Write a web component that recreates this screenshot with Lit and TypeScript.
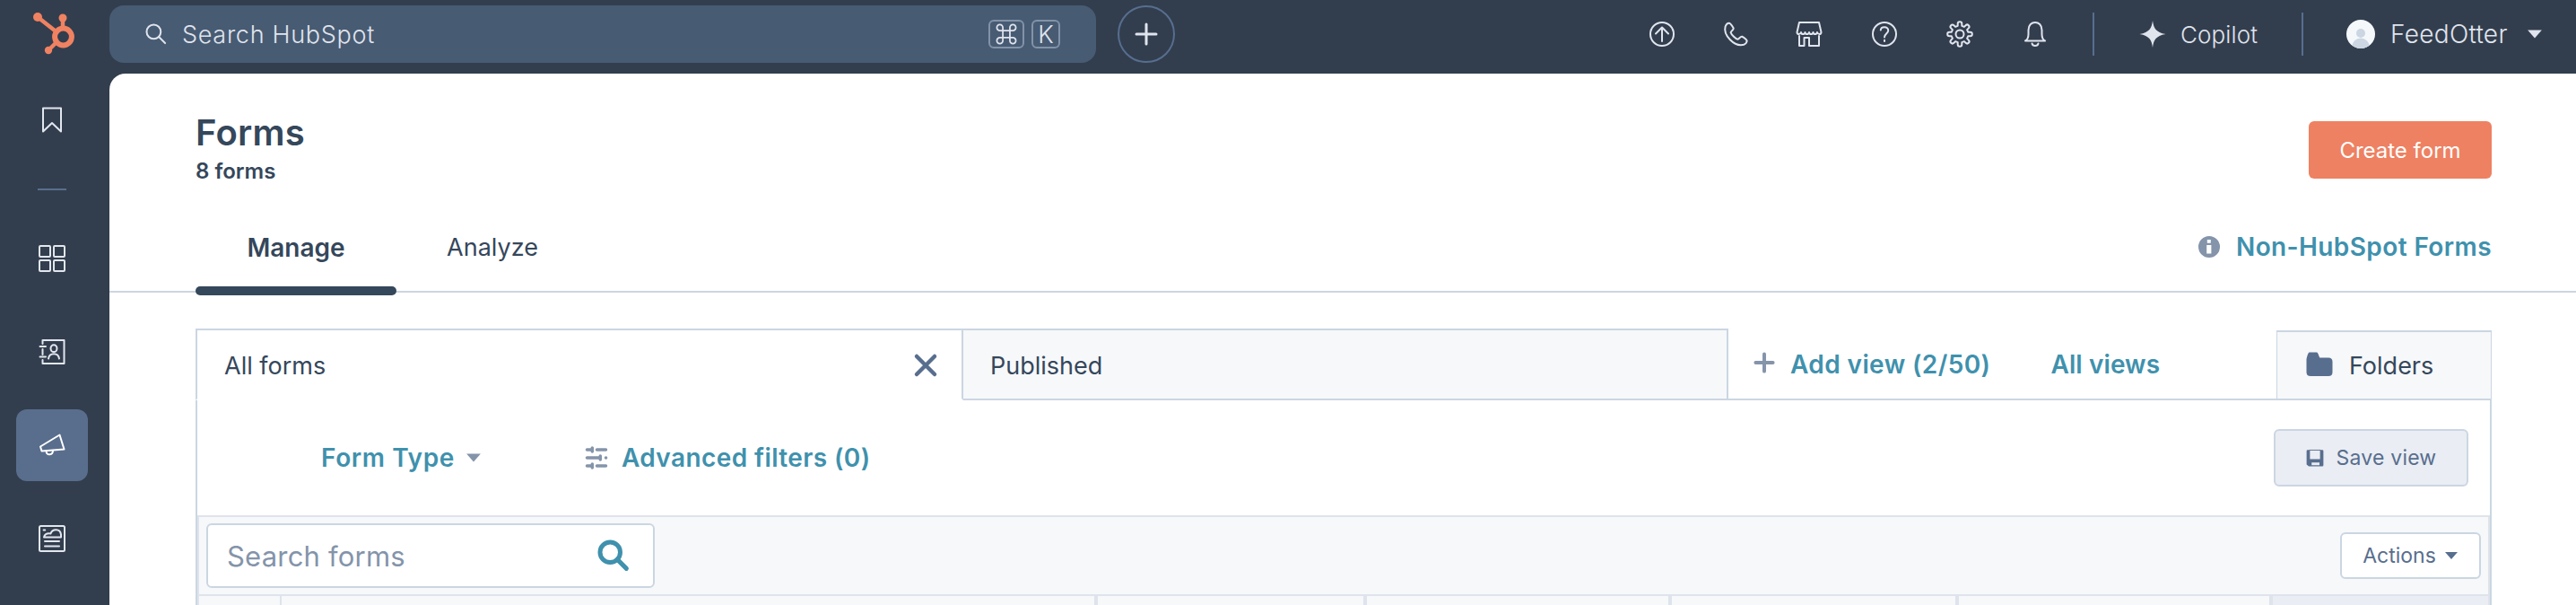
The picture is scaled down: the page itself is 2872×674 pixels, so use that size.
import { LitElement, html, css, svg, nothing } from 'lit';
import { customElement, property } from 'lit/decorators.js';

const OUTLINE_ICONS = {
  bookmark: svg`<path d="M6 2.500h20v26l-10-9.500-10 9.500z" />`,
  grid: svg`
    <rect x="2" y="2" width="12" height="12" rx="1" />
    <rect x="18" y="2" width="12" height="12" rx="1" />
    <rect x="2" y="18" width="12" height="12" rx="1" />
    <rect x="18" y="18" width="12" height="12" rx="1" />
  `,
  contacts: svg`
    <path d="M5.500 7V3h24v26h-24v-4M5.500 13v6M2.500 10h6.500M2.500 21.500h6.500" />
    <ellipse cx="18" cy="12.200" rx="3.500" ry="3.900" />
    <path d="M12 23.500c1-7 11-7 12 0" />
  `,
  megaphone: svg`
    <path d="M3 17.500L24.500 4.500 29.500 20.500 4.500 22.500z" />
    <path d="M9.500 22.500c.5 5.500 7.500 5 7.500-.7" />
  `,
  article: svg`
    <rect x="2" y="2" width="28" height="28" rx="1.500" />
    <path d="M7 14.500c1-4 4-4.500 7.500-4 1.500-5 10.500-6.500 11.500 1v3zM8 19h16M8 24.500h16" />
    <path d="M6.600 6.500h1.600" />
  `,
  search: svg`<circle cx="13" cy="13" r="9" /><path d="M19.500 19.500L27.500 27.500" />`,
  plus: svg`<path d="M16 5v22M5 16h22" />`,
  upgrade: svg`<circle cx="16" cy="16" r="13" /><path d="M16 24V9M9 15.500l7-7 7 7" />`,
  phone: svg`
    <path d="M4.600 7.500c.8-2 2.600-3.800 4-3.800 1.300 0 3.700 3.300 5 5.500.8 1.500-2.700 3.500-3 5 .6 2.200 5.800 7.300 7.800 7.600 1.500-.2 3.200-3.600 4.800-3 2 .8 5.400 3.600 5.500 4.900-.3 1.700-2 3.500-3.600 4.100C14.500 30.500 2 17 4.600 7.500z" />
  `,
  store: svg`
    <path d="M5 3h22l2.500 11c-.4 2.700-3.700 2.700-4.500 0-.6 2.700-4 2.700-4.500 0-.6 2.700-4 2.700-4.500 0-.6 2.700-4 2.700-4.500 0-.6 2.700-4 2.700-4.500 0-.8 2.700-4.100 2.700-4.500 0z" />
    <path d="M5 18v11h5.500v-9h5.500v9h11V18" />
  `,
  help: svg`
    <circle cx="16" cy="16" r="13" />
    <path d="M11.800 11.500c.3-4.500 8.600-4.500 8.400.5 0 3.500-4.200 3.700-4.200 7.500M16 22.700v1.200" />
  `,
  gear: svg`
    <path d="M13.700 6.800V4.500a2.300 2.300 0 0 1 4.600 0v2.300l2.600 1.100 1.700-1.700a2.200 2.200 0 0 1 3.200 3.200l-1.700 1.700 1.100 2.600h2.300a2.300 2.300 0 0 1 0 4.600h-2.300l-1.100 2.600 1.700 1.700a2.200 2.200 0 0 1-3.200 3.200l-1.700-1.700-2.600 1.100v2.300a2.300 2.300 0 0 1-4.600 0v-2.300l-2.600-1.100-1.700 1.700a2.200 2.200 0 0 1-3.200-3.200l1.700-1.700-1.100-2.600H4.500a2.300 2.300 0 0 1 0-4.600h2.300l1.100-2.600-1.700-1.700a2.200 2.200 0 0 1 3.200-3.200l1.700 1.700z" />
    <circle cx="16" cy="16" r="4.500" />
  `,
  bell: svg`
    <path d="M5 23.500c3-1.500 3.500-4 3.500-7.500v-4.500c0-11.500 15-11.500 15 0V16c0 3.500.5 6 3.500 7.500z" />
    <path d="M12.500 26.500c.8 3.300 6.200 3.300 7 0" />
  `,
  close: svg`<path d="M6 6l20 20M26 6L6 26" />`,
  sliders: svg`
    <path d="M5.500 7h5.800M16.500 7h10M5.500 16h14M26.500 16h.1M5.500 25h5.800M16.500 25h10" />
    <path d="M11.300 5v4M20.300 14v4M11.300 23v4" />
  `,
  command: svg`
    <path d="M11.500 11.500h9v9h-9zM11.500 11.500H8a3.800 3.800 0 1 1 3.500-3.700zM20.500 11.500V7.800a3.800 3.800 0 1 1 3.500 3.700zM20.500 20.500H24a3.800 3.800 0 1 1-3.500 3.700zM11.500 20.500v3.700A3.800 3.800 0 1 1 8 20.500z" />
  `,
};

const SOLID_ICONS = {
  sparkle: svg`<path d="M16 1c1.200 8.500 3.500 13 14.500 15-11 2-13.300 6.500-14.500 15-1.200-8.500-3.500-13-14.500-15C12.500 14 14.800 9.500 16 1z" />`,
  info: svg`
    <path fill-rule="evenodd" d="M16 4a12 12 0 1 0 0 24 12 12 0 0 0 0-24zM13.800 8h4v3.700h-4zM13.200 14h5.200v9.500h-5.200z" />
  `,
  folder: svg`<path d="M1.500 12c0-2 1.500-7.500 3-8.500h8.500c1.300 0 2 3.500 3.300 6H26c3 0 4.500 1.500 4.500 4.500v11.500c0 3-1.500 4.500-4.500 4.500H6c-3 0-4.500-1.500-4.500-4.500z" />`,
  save: svg`
    <path fill-rule="evenodd" d="M3 2h4v16.500h18V2h4a2 2 0 0 1 2 2v25a2 2 0 0 1-2 2H5l-4-3V4a2 2 0 0 1 2-2zM10 24.500v4.500h14v-4.500z" />
    <path d="M6 1.500h20v1.500H6z" />
  `,
  caret: svg`<path d="M2 8h28L16 24z" />`,
};

@customElement('ui-icon')
export class UiIcon extends LitElement {
  @property() name = '';
  @property({ type: Number }) size = 32;
  @property({ type: Number }) stroke = 2;

  static styles = css`
    :host {
      display: inline-flex;
      flex: none;
    }

    .outline {
      fill: none;
      stroke: currentColor;
      stroke-linecap: round;
      stroke-linejoin: round;
    }

    .solid {
      fill: currentColor;
    }
  `;

  render() {
    const solid = SOLID_ICONS[this.name];
    return html`
      <svg
        class=${solid ? 'solid' : 'outline'}
        width=${this.size}
        height=${this.size}
        stroke-width=${solid ? nothing : this.stroke}
        viewBox="0 0 32 32"
      >
        ${solid || OUTLINE_ICONS[this.name]}
      </svg>
    `;
  }
}

@customElement('side-nav')
export class SideNav extends LitElement {
  static styles = css`
    :host {
      display: flex;
      flex-direction: column;
      align-items: center;
      width: 122px;
      box-sizing: border-box;
      padding: 12px 6px 0 0;
      color: #e2e6ee;
    }

    .logo {
      flex: none;
      margin: 0 0 42px 4px;
      fill: #f08262;
      stroke: #f08262;
    }

    .item {
      display: flex;
      flex: none;
      align-items: center;
      justify-content: center;
      width: 80px;
      height: 80px;
      border-radius: 12px;
      margin-bottom: 24px;
    }

    .bookmark {
      height: 60px;
      margin-bottom: 46px;
    }

    .active {
      background: #596e8d;
      color: #fff;
    }

    hr {
      flex: none;
      width: 32px;
      height: 2px;
      margin: 0 0 36px;
      border: 0;
      background: #596e8d;
    }
  `;

  render() {
    return html`
      <svg class="logo" width="48" height="50" viewBox="0 0 48 50">
        <path d="M6 7L25 22M34 8v12M18 44l9-9" fill="none" stroke-width="4.500" />
        <circle cx="6" cy="7" r="5" stroke="none" />
        <circle cx="34" cy="8" r="4.500" stroke="none" />
        <circle cx="18" cy="44" r="4.200" stroke="none" />
        <circle cx="34.500" cy="29" r="9.400" fill="none" stroke-width="6" />
      </svg>
      <div class="item bookmark"><ui-icon name="bookmark"></ui-icon></div>
      <hr />
      ${['grid', 'contacts', 'megaphone', 'article'].map(
        (name) => html`
          <div class="item ${name === 'megaphone' ? 'active' : ''}">
            <ui-icon name=${name}></ui-icon>
          </div>
        `
      )}
    `;
  }
}

@customElement('top-bar')
export class TopBar extends LitElement {
  static styles = css`
    :host {
      display: flex;
      align-items: center;
      height: 76px;
      box-sizing: border-box;
      color: #e0e4ed;
      font-weight: 300;
      font-size: 27px;
    }

    .search {
      display: flex;
      align-items: center;
      box-sizing: border-box;
      width: 1100px;
      height: 64px;
      padding: 0 40px 0 38px;
      border-radius: 16px;
      background: #475b73;
    }

    .search span {
      flex: 1;
      margin-left: 15px;
      letter-spacing: 0.7px;
    }

    kbd {
      display: flex;
      align-items: center;
      justify-content: center;
      box-sizing: border-box;
      width: 32px;
      height: 32px;
      margin-left: 8px;
      border: 2px solid #8293a8;
      border-radius: 6px;
      font: inherit;
    }

    .wide {
      width: 40px;
    }

    .add {
      display: flex;
      align-items: center;
      justify-content: center;
      box-sizing: border-box;
      width: 64px;
      height: 64px;
      margin-left: 24px;
      border: 2px solid #576e8f;
      border-radius: 50%;
    }

    .tools {
      display: flex;
      gap: 52px;
      margin-left: auto;
    }

    .tools ui-icon:nth-child(-n + 2) {
      margin-right: -2px;
    }

    .divider {
      width: 2px;
      height: 48px;
      margin-left: 48px;
      background: #576e8f;
    }

    .copilot {
      display: flex;
      align-items: center;
      box-sizing: border-box;
      width: 231px;
      padding-left: 49px;
      font-size: 26px;
    }

    .copilot span {
      margin-left: 15px;
      letter-spacing: 0.1px;
    }

    .copilot + .divider {
      margin-left: 0;
    }

    .avatar {
      margin-left: 48px;
    }

    .account {
      width: 133px;
      margin-left: 17px;
      font-size: 28px;
      letter-spacing: 0.3px;
    }

    .menu {
      margin: 0 37px 0 19px;
    }
  `;

  render() {
    return html`
      <div class="search">
        <ui-icon name="search" size="28" stroke="2.300"></ui-icon>
        <span>Search HubSpot</span>
        <kbd class="wide"><ui-icon name="command" size="28"></ui-icon></kbd>
        <kbd>K</kbd>
      </div>
      <div class="add"><ui-icon name="plus" stroke="3"></ui-icon></div>
      <div class="tools">
        ${['upgrade', 'phone', 'store', 'help', 'gear', 'bell'].map(
          (name) => html`<ui-icon name=${name}></ui-icon>`
        )}
      </div>
      <div class="divider"></div>
      <div class="copilot">
        <ui-icon name="sparkle"></ui-icon>
        <span>Copilot</span>
      </div>
      <div class="divider"></div>
      <svg class="avatar" width="32" height="32" viewBox="0 0 32 32">
        <clipPath id="face"><circle cx="16" cy="16" r="16" /></clipPath>
        <g clip-path="url(#face)">
          <rect width="32" height="32" fill="#f5f8fa" />
          <g fill="#cbd6e2">
            <circle cx="16" cy="15" r="5" />
            <ellipse cx="16" cy="31" rx="10" ry="10.500" />
          </g>
        </g>
      </svg>
      <span class="account">FeedOtter</span>
      <ui-icon class="menu" name="caret" size="18"></ui-icon>
    `;
  }
}

@customElement('forms-page')
export class FormsPage extends LitElement {
  // Column widths, the last column takes what is left
  static columns = [92, 910, 300, 340, 320, 350];

  static styles = css`
    :host {
      display: block;
      color: #35475b;
      font-size: 27px;
    }

    .title-row {
      display: flex;
      justify-content: space-between;
      align-items: flex-start;
      height: 142px;
      box-sizing: border-box;
      padding: 43px 94px 0 96px;
    }

    h1 {
      margin: 0;
      font-size: 40px;
      line-height: 46px;
      font-weight: 600;
      letter-spacing: 0.2px;
    }

    .count {
      margin-top: 4px;
      font-size: 24px;
      line-height: 32px;
      font-weight: 600;
    }

    .create {
      display: flex;
      align-items: center;
      justify-content: center;
      width: 204px;
      height: 64px;
      margin-top: 10px;
      border-radius: 6px;
      background: #ee8162;
      color: #fff;
      font-size: 24px;
    }

    .nav {
      display: flex;
      height: 102px;
      box-sizing: border-box;
      padding: 0 94px 0 96px;
      border-bottom: 2px solid #cbd6e2;
    }

    .nav-tab {
      display: flex;
      flex-direction: column;
      justify-content: space-between;
      box-sizing: border-box;
      width: 214px;
      height: 105px;
      padding-top: 36px;
      line-height: 32px;
      text-align: center;
    }

    .nav-tab.current {
      width: 224px;
      font-size: 28px;
      font-weight: 600;
    }

    .bar {
      height: 10px;
      border-radius: 5px;
      background: #35475b;
    }

    .link {
      color: #3f91ad;
      font-size: 28px;
      font-weight: 600;
      letter-spacing: 0.4px;
    }

    .external {
      display: flex;
      align-items: center;
      gap: 14px;
      height: 32px;
      margin: 35px 0 0 auto;
    }

    .muted {
      color: #8494aa;
    }

    .views {
      display: flex;
      height: 80px;
      margin: 40px 94px 0 96px;
      box-shadow: inset 0 -2px #cbd6e2;
    }

    .view {
      display: flex;
      align-items: center;
      box-sizing: border-box;
      width: 853px;
      padding: 2px 24px 0 30px;
      border: 2px solid #cbd6e2;
      border-left: 0;
      background: #f6f8fa;
    }

    .view.selected {
      width: 856px;
      padding-left: 30px;
      border-left: 2px solid #cbd6e2;
      border-bottom-color: #fff;
      background: #fff;
    }

    .view ui-icon {
      margin-left: auto;
      color: #586e8e;
    }

    .add-view {
      display: flex;
      align-items: center;
      margin-left: 26px;
    }

    .add-view ui-icon {
      margin-bottom: 4px;
    }

    .add-view .link {
      margin-left: 15px;
    }

    .all-views {
      align-self: center;
      margin-left: 67px;
      letter-spacing: 0.1px;
    }

    .folders {
      display: flex;
      align-items: center;
      gap: 17px;
      box-sizing: border-box;
      width: 240px;
      height: 78px;
      margin: 2px 0 0 auto;
      padding-left: 31px;
      border: 1px solid #cbd6e2;
      border-width: 2px 1px;
      background: #f6f8fa;
    }

    .folders ui-icon {
      margin-top: -4px;
      color: #586e8e;
    }

    .panel {
      margin: 0 94px 0 96px;
      height: 228px;
      border: 2px solid #cbd6e2;
      border-width: 0 2px;
    }

    .filters {
      display: flex;
      align-items: center;
      height: 128px;
      padding: 0 24px 0 138px;
    }

    .type {
      letter-spacing: 0.6px;
    }

    .filters .caret {
      margin: 0 112px 0 12px;
    }

    .advanced {
      margin-left: 12px;
    }

    .save {
      display: flex;
      align-items: center;
      justify-content: center;
      gap: 14px;
      box-sizing: border-box;
      width: 217px;
      height: 64px;
      margin-left: auto;
      border: 2px solid #cbd6e2;
      border-radius: 6px;
      background: #eaedf3;
      color: #586e8e;
      font-size: 23px;
      letter-spacing: 0.2px;
    }

    .table {
      border: 2px solid #dfe3eb;
      border-bottom: 0;
      background: #f6f8fa;
    }

    .toolbar {
      display: flex;
      align-items: center;
      justify-content: space-between;
      height: 86px;
      padding: 0 8px;
      border-bottom: 2px solid #dfe3eb;
    }

    .query {
      display: flex;
      align-items: center;
      justify-content: space-between;
      box-sizing: border-box;
      width: 500px;
      height: 72px;
      padding: 0 24px 0 21px;
      border: 2px solid #cbd6e2;
      border-radius: 6px;
      background: #fff;
      color: #8494aa;
      font-size: 31px;
      letter-spacing: 0.2px;
    }

    .query ui-icon {
      color: #3f91ad;
    }

    .actions {
      display: flex;
      align-items: center;
      justify-content: center;
      gap: 9px;
      box-sizing: border-box;
      width: 157px;
      height: 52px;
      border: 2px solid #cbd6e2;
      border-radius: 6px;
      background: #fff;
      color: #586e8e;
      font-size: 23px;
    }

    .columns {
      display: flex;
      height: 14px;
    }

    .columns div {
      flex: none;
      box-sizing: border-box;
      border-right: 4px solid #dfe3eb;
    }

    .columns div:first-child {
      border-right-width: 2px;
    }

    .columns div:last-child {
      flex: 1;
      border: 0;
      background: #eaedf3;
    }
  `;

  render() {
    return html`
      <div class="title-row">
        <div>
          <h1>Forms</h1>
          <div class="count">8 forms</div>
        </div>
        <div class="create">Create form</div>
      </div>
      <div class="nav">
        <div class="nav-tab current">
          Manage
          <div class="bar"></div>
        </div>
        <div class="nav-tab">Analyze</div>
        <div class="external">
          <ui-icon class="muted" name="info"></ui-icon>
          <span class="link">Non-HubSpot Forms</span>
        </div>
      </div>
      <div class="views">
        <div class="view selected">
          All forms
          <ui-icon name="close" stroke="4.500"></ui-icon>
        </div>
        <div class="view">Published</div>
        <div class="add-view">
          <ui-icon class="muted" name="plus" size="28" stroke="4.500"></ui-icon>
          <span class="link">Add view (2/50)</span>
        </div>
        <span class="link all-views">All views</span>
        <div class="folders">
          <ui-icon name="folder"></ui-icon>
          Folders
        </div>
      </div>
      <div class="panel">
        <div class="filters">
          <span class="link type">Form Type</span>
          <ui-icon class="muted caret" name="caret" size="18"></ui-icon>
          <ui-icon class="muted" name="sliders" stroke="3.500"></ui-icon>
          <span class="link advanced">Advanced filters (0)</span>
          <div class="save">
            <ui-icon name="save" size="20"></ui-icon>
            Save view
          </div>
        </div>
        <div class="table">
          <div class="toolbar">
            <div class="query">
              Search forms
              <ui-icon name="search" size="40" stroke="4"></ui-icon>
            </div>
            <div class="actions">
              Actions
              <ui-icon name="caret" size="16"></ui-icon>
            </div>
          </div>
          <div class="columns">
            ${FormsPage.columns.map(
              (width) => html`<div style="width: ${width}px"></div>`
            )}
            <div></div>
          </div>
        </div>
      </div>
    `;
  }
}

@customElement('app-root')
export class AppRoot extends LitElement {
  static styles = css`
    :host {
      display: flex;
      width: 100%;
      height: 674px;
      overflow: hidden;
      background: #323e4e;
      font-family: Inter, 'Liberation Sans', sans-serif;
    }

    side-nav {
      flex: none;
    }

    .main {
      flex: 1;
      min-width: 0;
    }

    .page {
      height: 592px;
      margin-top: 6px;
      overflow: hidden;
      border-top-left-radius: 18px;
      background: #fff;
    }
  `;

  render() {
    return html`
      <side-nav></side-nav>
      <div class="main">
        <top-bar></top-bar>
        <div class="page"><forms-page></forms-page></div>
      </div>
    `;
  }
}
